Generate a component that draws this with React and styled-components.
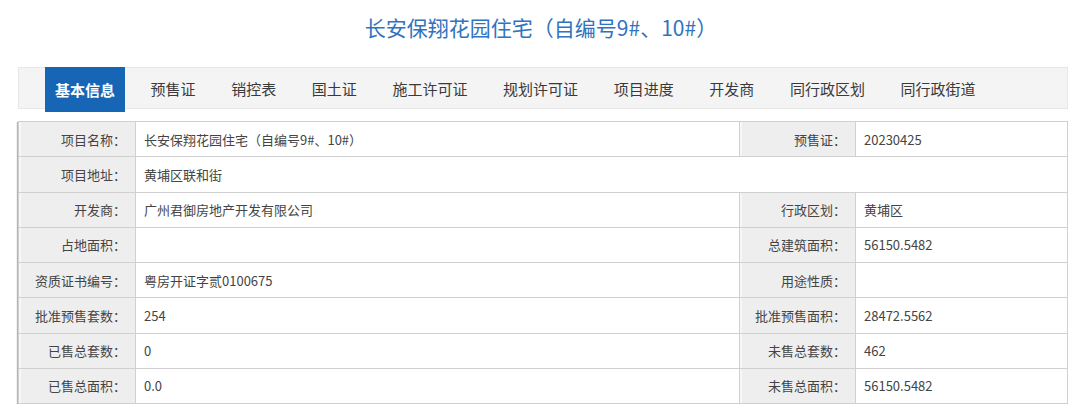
import React from 'react';
import styled, { createGlobalStyle } from 'styled-components';

const GlobalStyle = createGlobalStyle`
    body {
        margin: 0;
        background: #ffffff;
        font-family: "Noto Sans CJK SC", "Noto Sans", sans-serif;
        color: #333333;
    }
`;

const Page = styled.div`
    width: 1050px;
    margin-left: 18px;
    padding-top: 12px;
`;

const Title = styled.h1`
    margin: 0;
    text-align: center;
    font-size: 21px;
    line-height: 30px;
    font-weight: 400;
    color: #3073c0;
    padding-right: 4px;
`;

const TabBar = styled.div`
    box-sizing: border-box;
    height: 42px;
    margin-top: 25px;
    display: flex;
    align-items: flex-start;
    gap: 15.6px;
    padding-left: 26px;
    background: #f4f4f4;
    border: 1px solid #e7e7e7;
`;

const Tab = styled.div`
    padding: 0 10px;
    font-size: 15px;
    white-space: nowrap;
    height: ${props => props.active ? '45px' : '40px'};
    line-height: ${props => props.active ? '45px' : '42px'};
    margin-top: ${props => props.active ? '-1px' : '0'};
    background: ${props => props.active ? '#1766b5' : 'transparent'};
    color: ${props => props.active ? '#ffffff' : '#3a3a3a'};
    font-weight: ${props => props.active ? 700 : 400};
`;

const InfoTable = styled.table`
    margin-top: 12px;
    width: 1050px;
    table-layout: fixed;
    border-collapse: collapse;
    border: 1px solid #c2c2c2;
    box-shadow: -1px 1px 1px #b4b4b4;
    font-size: 13px;
`;

const Row = styled.tr`
    height: 35.25px;
`;

const LabelCell = styled.td`
    box-sizing: border-box;
    background: #eeeeee;
    border: 1px solid #d0d0d0;
    box-shadow: inset 2px 0 0 #f7f7f7;
    text-align: right;
    padding: 0 9px 0 0;
    color: #444444;
    white-space: nowrap;
`;

const ValueCell = styled.td`
    box-sizing: border-box;
    background: #ffffff;
    border: 1px solid #d0d0d0;
    padding: 0 0 0 8px;
    color: #444444;
    white-space: nowrap;
`;

const tabs = ['基本信息', '预售证', '销控表', '国土证', '施工许可证', '规划许可证', '项目进度', '开发商', '同行政区划', '同行政街道'];

const rows = [
    ['资质证书编号：', '粤房开证字贰0100675', '用途性质：', ''],
    ['批准预售套数：', '254', '批准预售面积：', '28472.5562'],
    ['已售总套数：', '0', '未售总套数：', '462'],
    ['已售总面积：', '0.0', '未售总面积：', '56150.5482'],
];

export default function App() {
    return (
        <Page>
            <GlobalStyle />
            <Title>长安保翔花园住宅（自编号9#、10#）</Title>
            <TabBar>
                {tabs.map((t, i) => (
                    <Tab key={t} active={i === 0}>{t}</Tab>
                ))}
            </TabBar>
            <InfoTable>
                <tbody>
                    <Row>
                        <LabelCell style={{ width: 117 }}>项目名称：</LabelCell>
                        <ValueCell style={{ width: 604 }}>长安保翔花园住宅（自编号9#、10#）</ValueCell>
                        <LabelCell style={{ width: 116 }}>预售证：</LabelCell>
                        <ValueCell>20230425</ValueCell>
                    </Row>
                    <Row>
                        <LabelCell>项目地址：</LabelCell>
                        <ValueCell colSpan={3}>黄埔区联和街</ValueCell>
                    </Row>
                    <Row>
                        <LabelCell>开发商：</LabelCell>
                        <ValueCell>广州君御房地产开发有限公司</ValueCell>
                        <LabelCell>行政区划：</LabelCell>
                        <ValueCell>黄埔区</ValueCell>
                    </Row>
                    <Row>
                        <LabelCell>占地面积：</LabelCell>
                        <ValueCell></ValueCell>
                        <LabelCell>总建筑面积：</LabelCell>
                        <ValueCell>56150.5482</ValueCell>
                    </Row>
                    {rows.map(r => (
                        <Row key={r[0]}>
                            <LabelCell>{r[0]}</LabelCell>
                            <ValueCell>{r[1]}</ValueCell>
                            <LabelCell>{r[2]}</LabelCell>
                            <ValueCell>{r[3]}</ValueCell>
                        </Row>
                    ))}
                </tbody>
            </InfoTable>
        </Page>
    );
}
